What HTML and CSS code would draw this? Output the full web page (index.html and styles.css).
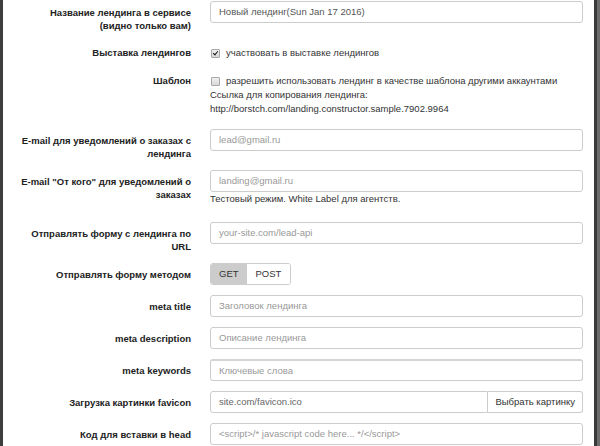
FILE: index.html
```html
<!DOCTYPE html>
<html lang="ru">
<head>
<meta charset="utf-8">
<title>Настройки лендинга</title>
<link rel="stylesheet" href="styles.css">
</head>
<body>
<div class="frame">
  <div class="edge-left"></div>
  <form class="settings">
    <div class="row">
      <div class="label">Название лендинга в сервисе<br>(видно только вам)</div>
      <div class="field"><div class="input value">Новый лендинг(Sun Jan 17 2016)</div></div>
    </div>

    <div class="row check-row">
      <div class="label">Выставка лендингов</div>
      <div class="field text">
        <div class="check-line"><span class="box checked"></span>участвовать в выставке лендингов</div>
      </div>
    </div>

    <div class="row check-row tall">
      <div class="label">Шаблон</div>
      <div class="field text">
        <div class="check-line"><span class="box"></span>разрешить использовать лендинг в качестве шаблона другими аккаунтами</div>
        <div>Ссылка для копирования лендинга:</div>
        <div>http://borstch.com/landing.constructor.sample.7902.9964</div>
      </div>
    </div>

    <div class="row">
      <div class="label">E-mail для уведомлений о заказах с<br>лендинга</div>
      <div class="field"><div class="input">lead@gmail.ru</div></div>
    </div>

    <div class="row">
      <div class="label">E-mail "От кого" для уведомлений о<br>заказах</div>
      <div class="field">
        <div class="input">landing@gmail.ru</div>
        <div class="help">Тестовый режим. White Label для агентств.</div>
      </div>
    </div>

    <div class="row">
      <div class="label">Отправлять форму с лендинга по<br>URL</div>
      <div class="field"><div class="input">your-site.com/lead-api</div></div>
    </div>

    <div class="row">
      <div class="label">Отправлять форму методом</div>
      <div class="field">
        <div class="toggle">
          <span class="btn active">GET</span><span class="btn">POST</span>
        </div>
      </div>
    </div>

    <div class="row">
      <div class="label">meta title</div>
      <div class="field"><div class="input">Заголовок лендинга</div></div>
    </div>

    <div class="row">
      <div class="label">meta description</div>
      <div class="field"><div class="input">Описание лендинга</div></div>
    </div>

    <div class="row">
      <div class="label">meta keywords</div>
      <div class="field"><div class="input thick-top">Ключевые слова</div></div>
    </div>

    <div class="row">
      <div class="label">Загрузка картинки favicon</div>
      <div class="field">
        <div class="input-group">
          <div class="input grouped value-dark">site.com/favicon.ico</div>
          <span class="addon">Выбрать картинку</span>
        </div>
      </div>
    </div>

    <div class="row">
      <div class="label">Код для вставки в head</div>
      <div class="field"><div class="input">&lt;script&gt;/* javascript code here... */&lt;/script&gt;</div></div>
    </div>
  </form>
  <div class="edge-right"></div>
</div>
</body>
</html>
```

FILE: styles.css
```css
html, body {
  margin: 0;
  padding: 0;
  background: #ffffff;
  height: 100%;
  overflow: hidden;
}

body {
  font-family: "Liberation Sans", Arial, sans-serif;
  font-size: 9.5px;
  color: #333333;
}

.frame {
  display: flex;
  height: 446px;
}

.edge-left {
  width: 3px;
  background: #3d3d3d;
  flex: none;
}

.edge-right {
  width: 6px;
  flex: none;
  background: linear-gradient(to right, #3a3a3a 0, #3a3a3a 3px, #6b6b6b 3px);
}

.settings {
  flex: 1;
  padding: 1px 11px 0 0;
}

.row {
  display: grid;
  grid-template-columns: 188px 1fr;
  column-gap: 19px;
  margin-bottom: 10px;
}

.label {
  text-align: right;
  font-weight: bold;
  color: #222222;
  line-height: 13px;
  padding-top: 5px;
}

.input {
  height: 22px;
  box-sizing: border-box;
  border: 1px solid #cccccc;
  border-radius: 3px;
  padding: 0 8px;
  line-height: 20px;
  color: #999999;
  background: #ffffff;
  white-space: nowrap;
  overflow: hidden;
}

.input.value {
  color: #555555;
}

.input.value-dark {
  color: #666666;
}

.input.thick-top {
  border-top: 2px solid #d4d4d4;
  line-height: 19px;
}

.help {
  line-height: 14px;
  color: #333333;
  margin-bottom: 6px;
}

.check-row .label {
  padding-top: 4px;
}

.text {
  padding-top: 4px;
  line-height: 14px;
  color: #333333;
}

.tall {
  padding-bottom: 3px;
}

.check-line {
  display: flex;
  align-items: center;
}

.box {
  width: 7px;
  height: 7px;
  border: 1px solid #a8a8a8;
  border-radius: 1px;
  background: linear-gradient(#f0f0f0, #d8d8d8);
  margin: 0 6px 0 1px;
  position: relative;
  flex: none;
}

.box.checked::after {
  content: "";
  position: absolute;
  left: 2px;
  top: 0;
  width: 2px;
  height: 4px;
  border-right: 1.5px solid #1a1a1a;
  border-bottom: 1.5px solid #1a1a1a;
  transform: rotate(40deg);
}

.toggle {
  display: inline-flex;
  height: 22px;
  box-sizing: border-box;
  border: 1px solid #cccccc;
  border-radius: 3px;
  overflow: hidden;
}

.btn {
  line-height: 20px;
  padding: 0 9px;
  color: #333333;
  background: #ffffff;
}

.btn.active {
  background: #cccccc;
  padding: 0 8px;
}

.input-group {
  display: flex;
}

.input.grouped {
  flex: 1;
  border-radius: 3px 0 0 3px;
}

.addon {
  height: 22px;
  box-sizing: border-box;
  border: 1px solid #cccccc;
  border-left: none;
  border-radius: 0 3px 3px 0;
  line-height: 20px;
  padding: 0 7px;
  color: #333333;
  background: #ffffff;
  white-space: nowrap;
}
```
